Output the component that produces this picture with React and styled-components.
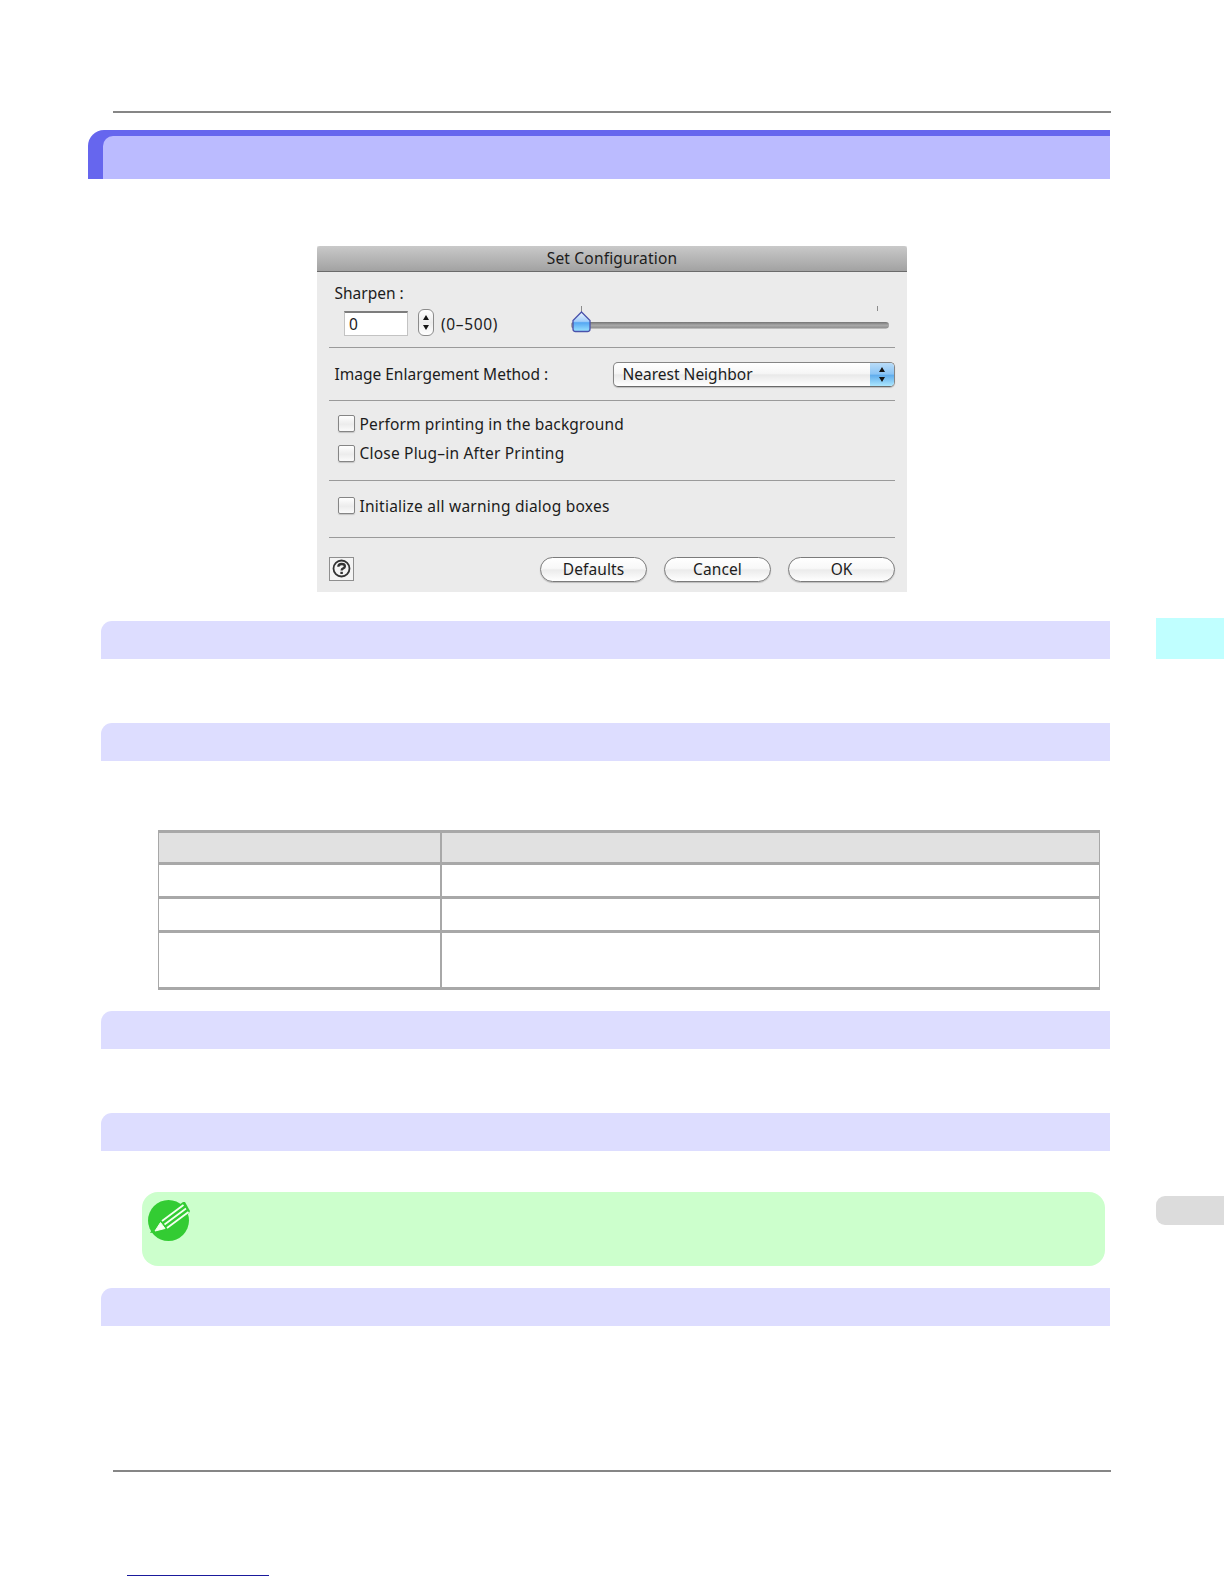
import React from 'react'
import styled, {createGlobalStyle} from 'styled-components'

const GlobalStyle = createGlobalStyle`
  body {
    margin: 0;
    background: white;
  }
  * {
    box-sizing: border-box;
  }
`

const Page = styled.div`
  display: flex;
  justify-content: space-between;
  width: 1224px;
  height: 1584px;
  overflow: hidden;
  background: white;
  color: #1c1c1c;
  font-family: 'Noto Sans', 'Open Sans', sans-serif;
  font-size: 15.5px;
`

const Main = styled.main`
  width: 1110px;
  padding: 111px 0 0 88px;
`

const Side = styled.aside`
  width: 68px;
  padding-top: 618px;
`

const ChapterTab = styled.div`
  height: 41px;
  background: #c0ffff;
`

const PageTab = styled.div`
  height: 29px;
  margin-top: 537px;
  border-radius: 9px 0 0 9px;
  background: #dcdcdc;
`

const Rule = styled.div`
  height: 2px;
  margin: ${p => p.$top || 0}px -1px 0 25px;
  background: #868686;
`

const Heading = styled.div`
  height: 49px;
  margin-top: 17px;
  padding: 6px 0 0 15px;
  border-radius: 16px 0 0 0;
  background: #6666ee;
`

const HeadingFill = styled.div`
  height: 43px;
  border-radius: 10px 0 0 0;
  background: #bbbbff;
`

const SectionBar = styled.div`
  height: 37.5px;
  margin: ${p => p.$top}px 0 0 13.4px;
  border-radius: 11px 0 0 0;
  background: #ddddff;
`

const Table = styled.div`
  display: grid;
  grid-template-columns: 281px 1fr;
  grid-template-rows: 29px 31px 31px 54px;
  row-gap: 3px;
  column-gap: 2px;
  width: 942px;
  margin: 69.5px 0 0 70px;
  padding: 3px 1px;
  background: #a8a8a8;
`

const Cell = styled.div`
  background: ${p => p.$head ? '#e1e1e1' : 'white'};
`

const Note = styled.div`
  width: 963px;
  height: 74px;
  margin: 41.5px 0 0 54px;
  padding: 7px 0 0 6px;
  border-radius: 16px;
  background: #ccffcc;
`

const FooterLink = styled.div`
  width: 142px;
  height: 1px;
  margin: 103px 0 0 39px;
  background: #1a1a9c;
`

const Dialog = styled.section`
  width: 590px;
  height: 346px;
  margin: 67px 0 0 229px;
  background: #ebebeb;
`

const TitleBar = styled.header`
  display: flex;
  justify-content: center;
  align-items: center;
  height: 26px;
  padding-bottom: 1px;
  border-bottom: 1px solid #6b6b6b;
  border-radius: 3px 3px 0 0;
  background: linear-gradient(#c9c9c9, #a2a2a2);
`

const Group = styled.div`
  display: flex;
  flex-direction: ${p => p.$column ? 'column' : 'row'};
  align-items: ${p => p.$column ? 'stretch' : 'center'};
  height: ${p => p.$height}px;
  margin: 0 12px;
  padding: ${p => p.$pad || '0'};
  border-bottom: 1px solid #9a9a9a;
`

const Text = styled.span`
  line-height: 20px;
  white-space: pre;
  letter-spacing: ${p => p.$spacing || 0}px;
`

const SharpenRow = styled.div`
  display: flex;
  align-items: center;
  height: 26px;
  margin-top: 8px;
`

const NumberBox = styled.div`
  display: flex;
  align-items: center;
  width: 64px;
  height: 25px;
  margin: -1px 10px 0 9.5px;
  padding: 0 0 1px 4px;
  border: 1px solid #c3c3c3;
  border-top: 2px solid #7d7d7d;
  background: white;
`

const Stepper = styled.div`
  display: flex;
  justify-content: center;
  align-items: center;
  width: 16px;
  height: 27px;
  margin: -3px 7px 0 0;
  border: 1.5px solid #8b8b8b;
  border-radius: 6px;
  background: linear-gradient(#ffffff, #ececec 50%, #ffffff);
`

const PopUp = styled.div`
  display: flex;
  justify-content: space-between;
  align-items: center;
  width: 282px;
  height: 25px;
  margin-left: auto;
  padding-left: 8.5px;
  border: 1px solid #858585;
  border-bottom-color: #6a6a6a;
  border-radius: 5px;
  overflow: hidden;
  background: linear-gradient(#ffffff, #f6f6f6 45%, #e9e9e9 52%, #ffffff);
  box-shadow: 0 1px 1px #bdbdbd;
`

const PopUpArrows = styled.div`
  display: flex;
  justify-content: center;
  align-items: center;
  width: 24px;
  height: 25px;
  border-top: 1px solid #3f4fa8;
  background: linear-gradient(#b9dcf8, #8cc5f5 45%, #62aeed 52%, #b3ecff);
`

const CheckRow = styled.div`
  display: flex;
  align-items: center;
  height: 29.5px;
  padding-left: 9px;
`

const CheckBox = styled.span`
  width: 17px;
  height: 17px;
  margin-right: 4.5px;
  border: 1px solid #858585;
  border-radius: 2px;
  background: linear-gradient(#ffffff, #ececec 55%, #fbfbfb);
  box-shadow: 0 1px 1px #c4c4c4;
`

const Footer = styled.footer`
  display: flex;
  align-items: center;
  gap: 17px;
  height: 54px;
  padding: 8px 12px 0;
`

const HelpButton = styled.div`
  display: flex;
  justify-content: center;
  align-items: center;
  width: 25px;
  height: 24px;
  margin: -1px auto 0 0;
  border: 1px solid #8f8f8f;
  background: #f4f4f4;
`

const Button = styled.div`
  display: flex;
  justify-content: center;
  align-items: center;
  width: 107px;
  height: 25px;
  padding-bottom: 1px;
  border: 1.5px solid #7b7b7b;
  border-radius: 13px;
  background: linear-gradient(#ffffff, #f8f8f8 45%, #ebebeb 52%, #ffffff);
  box-shadow: 0 1px 1px #bdbdbd;
`

const SliderSvg = styled.svg`
  flex: none;
  margin: -9px 0 0 auto;
`

function Arrows () {
  return (
    <svg width='8' height='17' viewBox='0 0 8 17'>
      <path d='M4 1 L7 6 H1 Z M4 16 L1 11 H7 Z' fill='#151515' />
    </svg>
  )
}

function Slider () {
  return (
    <SliderSvg width='325' height='30' viewBox='0 0 325 30'>
      <defs>
        <linearGradient id='track' x1='0' y1='0' x2='0' y2='1'>
          <stop offset='0' stopColor='#747474' />
          <stop offset='.5' stopColor='#a9a9a9' />
          <stop offset='1' stopColor='#8c8c8c' />
        </linearGradient>
        <linearGradient id='thumb' x1='0' y1='0' x2='0' y2='1'>
          <stop offset='0' stopColor='#f0f7ff' />
          <stop offset='.48' stopColor='#a2cefa' />
          <stop offset='.55' stopColor='#55a7f3' />
          <stop offset='1' stopColor='#9be4ff' />
        </linearGradient>
      </defs>
      <path d='M11.5 1 V7 M307.5 1 V6' stroke='#8b8b8b' />
      <rect x='1' y='17' width='318' height='6.5' rx='3.2' fill='url(#track)' />
      <path d='M11.5 7 L20 15.5 V24 Q20 26.5 17.5 26.5 H5.5 Q3 26.5 3 24 V15.5 Z' fill='url(#thumb)' stroke='#4a52ab' strokeWidth='1.3' />
    </SliderSvg>
  )
}

function HelpIcon () {
  return (
    <svg width='19' height='19' viewBox='0 0 19 19' fill='none' stroke='#333'>
      <circle cx='9.5' cy='9.5' r='8' strokeWidth='1.8' />
      <path d='M6.3 7.7 Q6.4 5 9.6 5 Q12.9 5 12.9 7.3 Q12.9 8.7 11.2 9.4 Q9.6 10 9.6 11.6' strokeWidth='2.3' />
      <path d='M9.6 12.8 V15' strokeWidth='2.5' />
    </svg>
  )
}

function PencilIcon () {
  return (
    <svg width='45' height='44' viewBox='0 0 45 44'>
      <circle cx='20.5' cy='21.5' r='20.5' fill='#33cc33' />
      <path d='M2 34 L8 24 L35 3 L37 3 L42 12 L41 14 L16 32 Z' fill='#33cc33' />
      <path d='M7 32 L12.5 23.5 L17 29.5 Z' fill='#f4fff0' stroke='#f4fff0' strokeLinejoin='round' />
      <path d='M14 22 L35.5 6 M16.5 25.5 L38 9.5 M19 29 L40.5 13' stroke='#f4fff0' strokeWidth='1.8' />
    </svg>
  )
}

function Check ({label, spacing}) {
  return (
    <CheckRow>
      <CheckBox />
      <Text $spacing={spacing}>{label}</Text>
    </CheckRow>
  )
}

function ConfigDialog () {
  return (
    <Dialog>
      <TitleBar><Text $spacing={0.18}>Set Configuration</Text></TitleBar>
      <Group $column $height={76} $pad='11px 0 0 5.5px'>
        <Text>Sharpen :</Text>
        <SharpenRow>
          <NumberBox>0</NumberBox>
          <Stepper><Arrows /></Stepper>
          <Text $spacing={0.65}>(0–500)</Text>
          <Slider />
        </SharpenRow>
      </Group>
      <Group $height={53} $pad='0 0 0 5.5px'>
        <Text>Image Enlargement Method :</Text>
        <PopUp>
          <Text>Nearest Neighbor</Text>
          <PopUpArrows><Arrows /></PopUpArrows>
        </PopUp>
      </Group>
      <Group $column $height={80} $pad='8px 0 0'>
        <Check label='Perform printing in the background' spacing={0.14} />
        <Check label='Close Plug–in After Printing' spacing={0.2} />
      </Group>
      <Group $column $height={57} $pad='10px 0 0'>
        <Check label='Initialize all warning dialog boxes' spacing={0.24} />
      </Group>
      <Footer>
        <HelpButton><HelpIcon /></HelpButton>
        <Button><Text $spacing={0.1}>Defaults</Text></Button>
        <Button><Text $spacing={0.1}>Cancel</Text></Button>
        <Button><Text>OK</Text></Button>
      </Footer>
    </Dialog>
  )
}

const cells = [0, 1, 2, 3, 4, 5, 6, 7]

export default function App () {
  return (
    <Page>
      <GlobalStyle />
      <Main>
        <Rule />
        <Heading><HeadingFill /></Heading>
        <ConfigDialog />
        <SectionBar $top={29} />
        <SectionBar $top={64.5} />
        <Table>
          {cells.map(i => <Cell key={i} $head={i < 2} />)}
        </Table>
        <SectionBar $top={21} />
        <SectionBar $top={64.5} />
        <Note><PencilIcon /></Note>
        <SectionBar $top={22} />
        <Rule $top={144.5} />
        <FooterLink />
      </Main>
      <Side>
        <ChapterTab />
        <PageTab />
      </Side>
    </Page>
  )
}
